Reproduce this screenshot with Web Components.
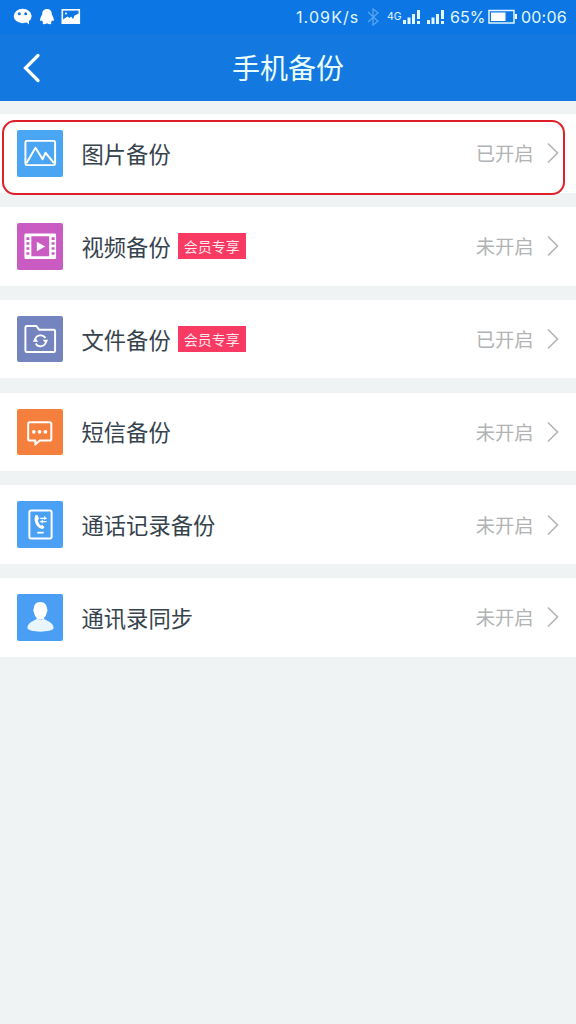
<!DOCTYPE html>
<html lang="zh-CN">
<head>
<meta charset="utf-8">
<title>手机备份</title>
<style>
html,body{margin:0;height:100%;overflow:hidden;background:#f0f3f4}
body{font-family:"Noto Sans CJK SC",sans-serif}
</style>
</head>
<body>
<backup-page></backup-page>
<script>
const define = (name, html, setup) => customElements.define(name, class extends HTMLElement {
  connectedCallback() {
    if (this.shadowRoot) return;
    const t = document.createElement('template');
    t.innerHTML = html;
    const root = this.attachShadow({mode: 'open'});
    root.append(t.content.cloneNode(true));
    if (setup) setup(this, root);
  }
});

const icons = {
  picture: ['#4aa5f2', `<rect x="8.5" y="11" width="30" height="24.5" rx="1.5"/><path d="M9.5 33.5l9.200-15.500 7.200 11.500 3-6.500 8.500 10.500"/>`],
  video: ['#c95bc2', `<path fill="#fff" stroke="none" fill-rule="evenodd" d="M9 10.500h29a1.500 1.500 0 0 1 1.500 1.500v23a1.500 1.500 0 0 1-1.500 1.500H9A1.500 1.500 0 0 1 7.500 35V12A1.500 1.500 0 0 1 9 10.500zM14.500 13.500v20h18v-20z"/><path stroke="#c95bc2" stroke-width="3" stroke-dasharray="2.600 2.400" d="M11 14.500v19M36.500 14.500v19"/><path fill="#fff" stroke="none" d="M20 19l8.500 4.700-8.500 4.800z"/>`],
  file: ['#7484bf', `<path d="M8.500 35V11.500q0-1.500 1.500-1.500h9.500l3 4H37q1.500 0 1.500 1.500V35q0 1.500-1.500 1.500H10q-1.500 0-1.500-1.500z"/><path stroke-width="1.800" d="M18.300 24.500a5.600 5.600 0 0 1 10.400-2.200M29.300 25.500a5.600 5.600 0 0 1-10.400 2.300"/><path fill="#fff" stroke="none" d="M26 24h5.500l-2.200 4zM21.500 26H16l2.300-4z"/>`],
  sms: ['#f5803e', `<path d="M13 13.500h20q1.700 0 1.700 1.700v15q0 1.700-1.700 1.700H23l-4.500 4v-4H13q-1.700 0-1.700-1.700v-15q0-1.700 1.700-1.700z"/><g fill="#fff" stroke="none"><circle cx="16.900" cy="23" r="1.900"/><circle cx="22.800" cy="23" r="1.900"/><circle cx="28.700" cy="23" r="1.900"/></g>`],
  call: ['#4aa0f5', `<rect x="12.500" y="9.500" width="22.500" height="28.500" rx="1.800"/><path fill="#fff" stroke="none" d="M18.500 14.500l2.200-.400 1.600 3.700-1.300 1.700q.4 3.200 2.800 5.200l2-.4 2 2.300-1.400 1.500q-2.700.8-5.800-2.600-4.300-5-2.100-11z"/><path stroke-width="1.200" d="M23.500 17.500h6.500M23.500 20.800h6.500M28 15.500v3.500M25.500 19v3.500"/><path stroke-width="1.800" d="M20.500 32h6.500"/>`],
  contact: ['#4a9ff5', `<path fill="#fff" stroke="none" d="M23.500 8c4.500 0 6.700 3 6.700 6.500q1.400 1.600 0 4.300-.7 3.500-2.900 5.500v1.400h-7.300v-1.400q-2.300-2-2.900-5.500-1.400-2.700 0-4.300C17.100 11 19 8 23.500 8z"/><path fill="#e9f5ff" stroke="none" d="M20 25c2 1.500 5.300 1.500 7.300 0 1.500 1.700 9.700 3.600 9.700 9.200 0 5.200-26.500 5.200-26.500 0 0-5.600 8-7.500 9.500-9.200z"/>`]
};

define('app-icon', `<style>:host{display:block;width:46.500px;height:46.500px;border-radius:2px}svg{display:block}</style>`, (host, root) => {
  const [color, art] = icons[host.getAttribute('name')];
  host.style.background = color;
  const t = document.createElement('template');
  t.innerHTML = `<svg width="46.500" height="46.500" viewBox="0 0 47 47" fill="none" stroke="#fff" stroke-width="2" stroke-linejoin="round">${art}</svg>`;
  root.append(t.content);
});

define('member-badge', `<style>
:host{display:block;width:67.500px;height:26px;background:#f93b63;color:#ffe9ef;font-size:14px;line-height:26px;text-align:center;white-space:nowrap}
</style><slot></slot>`);

define('phone-status', `<style>
:host{display:flex;height:34px;background:#0b76e4;color:#e2f7ff;font:16px/34px Inter,sans-serif;align-items:center;box-sizing:border-box;padding-left:13px}
svg{display:block;flex:none}span{flex:none;white-space:nowrap}
.left{margin-right:auto}.rate{width:71px;letter-spacing:1.100px}.net{font-size:10.500px;width:15px}.pct{width:38px}.time{width:55px;letter-spacing:.2px}
</style>
<svg class="left" width="70" height="34" fill="#fff"><ellipse cx="9.700" cy="16" rx="9" ry="7.200"/><path d="M12 21l4 3.500v-5z"/><circle cx="6.300" cy="13.800" r="1.500" fill="#0b76e4"/><circle cx="12.700" cy="13.800" r="1.500" fill="#0b76e4"/>
<path d="M34 9c3.500 0 5 2.500 4.800 5.500 1.200 2 2.300 4 2 6.200-.7.600-1.300 0-1.800-.5-.2 1-.7 1.500-1.200 2 1 .7.800 2-.800 2-1.200 0-2.200-.3-3-.9-.8.600-1.800.9-3 .9-1.600 0-1.800-1.300-.8-2-.5-.5-1-1-1.200-2-.5.500-1.100 1.100-1.800.5-.3-2.200.8-4.200 2-6.200C29 11.500 30.500 9 34 9z"/>
<rect x="49.300" y="9.800" width="17" height="13.400" fill="none" stroke="#fff" stroke-width="1.600"/><path d="M50 23v-3.500l4.500-3 2 1.500 1.500-1.500 2 2.500 1.500-3.500 4.500-2V23z"/><circle cx="53" cy="13.500" r="1"/></svg>
<span class="rate">1.09K/s</span>
<svg width="20" height="34" fill="none" stroke="#58a5f0" stroke-width="1.300"><path d="M1 12l10 9.200-5 3.800V9l5 3.800L1 22"/></svg>
<span class="net">4G</span>
<svg width="48" height="34" fill="#e2f7ff"><g id="s"><rect x="1" y="20" width="3" height="4"/><rect x="5.500" y="17.500" width="3" height="6.500"/><rect x="10" y="14" width="3" height="10"/><rect x="15" y="10" width="3" height="9"/><rect x="15" y="21" width="3" height="3"/></g><use href="#s" x="24"/></svg>
<span class="pct">65%</span>
<svg width="33" height="34"><rect x="1" y="10.500" width="25" height="12.500" fill="none" stroke="#e2f7ff" stroke-width="1.500"/><path fill="#fff" d="M3 12.500h14.500V21H3zM27 14h2v5h-2z"/></svg>
<span class="time">00:06</span>`);

define('title-bar', `<style>
:host{display:grid;grid-template-columns:64px 1fr 64px;height:66.500px;background:#1378df;color:#eaffff;align-items:center}
h1{margin:0;text-align:center;font-size:28px;font-weight:400;line-height:66px}
svg{display:block}
</style><svg width="64" height="66" fill="none" stroke="#fff" stroke-width="3.200" stroke-linecap="round"><path d="M38 21.500L25.500 34 38 46.500"/></svg><h1><slot></slot></h1>`);

define('backup-row', `<style>
:host{display:flex;position:relative;height:78.600px;background:#fff;align-items:center;box-sizing:border-box;padding:0 16px 0 16.500px}
.label{margin-left:18.500px;font-size:22.300px;line-height:34px;color:#36434d;white-space:nowrap;margin-right:7.300px;padding-bottom:1px}
.state{margin-left:auto;font-size:19.300px;line-height:30px;color:#b1b3b5;margin-right:12.500px;white-space:nowrap}
svg{display:block;flex:none}
:host([marked])::after{content:"";position:absolute;left:2px;top:5.500px;width:563px;height:75px;box-sizing:border-box;border:2px solid #df2028;border-radius:13px;z-index:1}
</style><div class="icon"></div><span class="label"><slot></slot></span><slot name="badge"></slot><span class="state"></span>
<svg width="14" height="24" fill="none" stroke="#b5b8ba" stroke-width="1.700"><path d="M2 2.500l9.500 9.500L2 21.500"/></svg>`, (host, root) => {
  const icon = document.createElement('app-icon');
  icon.setAttribute('name', host.getAttribute('icon'));
  root.querySelector('.icon').append(icon);
  root.querySelector('.state').textContent = host.getAttribute('state');
});

define('backup-page', `<style>
:host{display:block;width:576px;height:1024px;background:#f0f3f4}
main{display:flex;flex-direction:column;gap:14.200px;padding-top:13.700px}
</style>
<phone-status></phone-status>
<title-bar>手机备份</title-bar>
<main>
<backup-row icon="picture" state="已开启" marked>图片备份</backup-row>
<backup-row icon="video" state="未开启">视频备份<member-badge slot="badge">会员专享</member-badge></backup-row>
<backup-row icon="file" state="已开启">文件备份<member-badge slot="badge">会员专享</member-badge></backup-row>
<backup-row icon="sms" state="未开启">短信备份</backup-row>
<backup-row icon="call" state="未开启">通话记录备份</backup-row>
<backup-row icon="contact" state="未开启">通讯录同步</backup-row>
</main>`);
</script>
</body>
</html>
